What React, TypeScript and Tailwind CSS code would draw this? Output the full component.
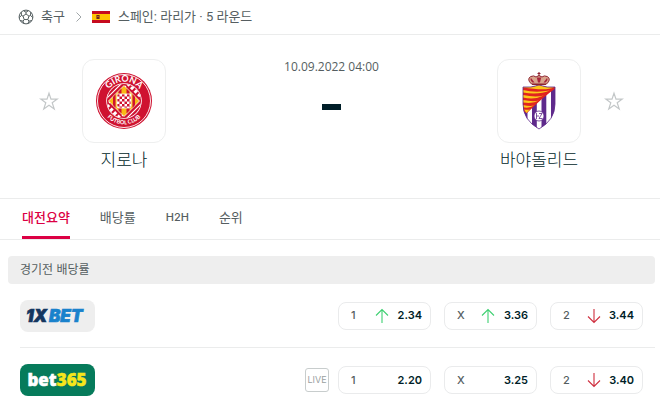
import React from "react";

const latin = "font-['Inter','Noto_Sans_CJK_KR',sans-serif]";

function Ball() {
  return (
    <svg viewBox="0 0 20 20" className="size-4 shrink-0" fill="none" stroke="#4a5557" strokeWidth="1.2" aria-hidden="true">
      <circle cx="10" cy="10" r="8.6" />
      <path d="M10 6.2l3.7 2.7-1.4 4.3H7.7L6.3 8.9z" />
      <path d="M10 6.2V4M13.7 8.9l2-.8M12.3 13.2l1.4 2M7.7 13.2l-1.4 2M6.3 8.9l-2-.8" />
      <path d="M6.8 2.2L10 4l3.2-1.8M15.9 4l-.2 4.1 2.7 2.6M17.2 14.4l-3.5.8-1.2 3M7.5 18.2l-1.2-3-3.5-.8M1.6 10.7l2.7-2.6L4.1 4" />
    </svg>
  );
}

function Flag() {
  return (
    <svg viewBox="0 0 18 12" className="ml-2.5 h-3 w-[18px] shrink-0" role="img" aria-label="스페인">
      <path fill="#c60b1e" d="M0 0h18v12H0z" />
      <path fill="#ffc400" d="M0 3h18v6H0z" />
      <path fill="#ad6518" d="M4 4h4v4H4z" />
      <path fill="#6b2a1c" d="M5 4h2v1H5zM5 6h2v2H5z" />
    </svg>
  );
}

function Star({ team }: { team: string }) {
  return (
    <button aria-label={`${team} 즐겨찾기`} className="size-5 shrink-0">
      <svg viewBox="0 0 20 20" className="size-5" fill="none" stroke="#c3c7c8" strokeWidth="1.2" strokeLinejoin="miter">
        <path d="M10 2.2l2 5.9h6.3l-5.1 3.7 2 6.1L10 14.2l-5.2 3.7 2-6.1L1.7 8.1H8z" />
      </svg>
    </button>
  );
}

function GironaCrest() {
  return (
    <svg viewBox="0 0 56 56" className="size-14" role="img" aria-label="Girona">
      <defs>
        <clipPath id="inner"><circle cx="28" cy="28" r="17" /></clipPath>
        <pattern id="check" width="5" height="5" patternUnits="userSpaceOnUse" x="21" y="21">
          <path fill="#fff" d="M0 0h5v5H0z" />
          <path fill="#cf1230" d="M0 0h2.500v2.500H0zM2.500 2.500h2.500v2.500H2.500z" />
        </pattern>
        <path id="arcTop" d="M8.6 28a19.4 19.4 0 0 1 38.8 0" />
        <path id="arcBottom" d="M4.6 28a23.4 23.4 0 0 0 46.8 0" />
      </defs>
      <circle cx="28" cy="28" r="28" fill="#cf1230" />
      <circle cx="28" cy="28" r="26.5" fill="none" stroke="#fff" strokeWidth=".9" />
      <circle cx="28" cy="28" r="17.8" fill="#fff" />
      <g clipPath="url(#inner)">
        <path fill="#cf1230" d="M11 11h34v34H11z" />
        <path stroke="#fff" strokeWidth="4.5" strokeDasharray="3 2" d="M32 10l17 17M7 29l17 17" />
        <path stroke="#fff" strokeWidth="1.2" d="M10 26l16-16M13 30l17-17M30 46l16-16M26 43l16-16" />
        <path fill="#f9bb16" stroke="#fff" strokeWidth=".8" d="M28 12.500l15.500 15.500-15.500 15.500-15.500-15.500z" />
        <path fill="#cf1230" d="M17 24l2.500-3v14l-2.500-3zM22.500 18.500l3-3v25l-3-3zM30.500 15.500l3 3v19l-3 3zM36.500 21l2.500 3v8l-2.500 3z" />
        <path fill="url(#check)" stroke="#fff" strokeWidth=".8" d="M21 21h14v12q0 2-2 2H23q-2 0-2-2z" />
      </g>
      <g fill="#fff" textAnchor="middle" className="font-['Lato',sans-serif] font-bold">
        <text fontSize="9"><textPath href="#arcTop" startOffset="50%">GIRONA</textPath></text>
        <text fontSize="5.6"><textPath href="#arcBottom" startOffset="50%">FUTBOL CLUB</textPath></text>
      </g>
    </svg>
  );
}

function ValladolidCrest() {
  return (
    <svg viewBox="0 0 34 58" className="h-[58px] w-[34px]" role="img" aria-label="Valladolid">
      <defs>
        <clipPath id="shield"><path d="M1 15q8 1 16-2 8 3 16 2v17q0 16-16 25Q1 48 1 32z" /></clipPath>
      </defs>
      <g clipPath="url(#shield)">
        <path fill="#fff" d="M0 12h34v46H0z" />
        <path fill="#5f2a8c" d="M0 12h5.500v46H0zM10 12h4.800v46H10zM19.500 12h4.800v46h-4.800zM29 12h5v46h-5z" />
        <path fill="#e0241f" d="M0 12h34v4Q22 24 5 41L0 39z" />
        <path fill="#fdc81a" d="M1 13h17l14 2.500Q24 19 1 15.500zM1 18q12 3 27 .5Q17 23 1 20.500zM1 23q12 2.500 21 .5Q13 28 1 25.500zM1 28q10 2 16 .5Q11 32 1 30.500zM1 33q7 1.500 11 .5-4 3-11 1.800zM2 37.500q4 .8 6-.2L4.500 41z" />
      </g>
      <path fill="none" stroke="#5f2a8c" strokeWidth=".8" d="M1 15q8 1 16-2 8 3 16 2v17q0 16-16 25Q1 48 1 32z" />
      <circle cx="17" cy="44" r="5" fill="#fff" stroke="#5f2a8c" strokeWidth=".8" />
      <path fill="none" stroke="#5f2a8c" strokeWidth=".8" d="M14.500 41v6M14.500 44h2.500M17 41.500h3l-3 5h3.500" />
      <path fill="#d9a58c" stroke="#8e2432" strokeWidth="1" d="M9.500 12Q4.500 7.500 8.500 4.600q3.500-1.600 5.500.4 3-3 6 0 2-2 5.500-.4 4 2.900-1 7.400z" />
      <path fill="#a8263c" d="M9 6l3.500 4.500h-2Q7.500 8 9 6zM14.800 5.500h4.400L18 10.500h-2zM25 6l-3.500 4.500h2Q26.500 8 25 6z" />
      <path stroke="#8e2432" strokeWidth="1.1" d="M17 0v4M15.500 1.500h3M10 12.500h14" />
    </svg>
  );
}

function Team({ name, children }: { name: string; children: React.ReactNode }) {
  return (
    <a href="#team" className="flex w-[84px] flex-col items-center">
      <span className="flex size-[84px] items-center justify-center rounded-xl border border-[#eeefef] bg-white">{children}</span>
      <span className="mt-1 text-[17px] leading-[26px] font-light whitespace-nowrap text-[#001e28]">{name}</span>
    </a>
  );
}

function Move({ dir }: { dir: "up" | "down" }) {
  return (
    <svg
      viewBox="0 0 14 16"
      className={dir === "up" ? "h-4 w-[14px] text-[#3fd072]" : "h-4 w-[14px] rotate-180 text-[#cf2f3f]"}
      fill="none"
      stroke="currentColor"
      strokeWidth="1.1"
      role="img"
      aria-label={dir === "up" ? "상승" : "하락"}
    >
      <path d="M7 15V1.500M1 7.500l6-6 6 6" />
    </svg>
  );
}

type Odd = { label: string; value: string; dir?: "up" | "down" };

function OddButton({ label, value, dir }: Odd) {
  return (
    <button className="flex h-7 w-[93px] items-center rounded-lg border border-[#eaebec] pr-2 pl-3 text-[11px] font-semibold text-[#001e28]">
      <span className="w-6 text-left font-medium text-[#555e61]">{label}</span>
      {dir && <Move dir={dir} />}
      <span className="ml-auto">{value}</span>
    </button>
  );
}

function OddsRow({ logo, odds, live }: { logo: React.ReactNode; odds: Odd[]; live?: boolean }) {
  return (
    <div className="flex h-16 items-center justify-between">
      {logo}
      <div className={`flex items-center gap-[13px] pr-3 ${latin}`}>
        {live && (
          <span className="-mr-1 flex size-6 items-center justify-center rounded-[3px] border border-[#c8cdcd] text-[9px] text-[#999fa1]">
            LIVE
          </span>
        )}
        {odds.map((o) => (
          <OddButton key={o.label} {...o} />
        ))}
      </div>
    </div>
  );
}

function OneXBet() {
  return (
    <a href="#1xbet" className="block h-8 w-[75px] rounded-lg bg-[#eeeeee]">
      <svg viewBox="0 0 75 32" className="h-8 w-[75px] font-['Inter',sans-serif] font-black italic" role="img" aria-label="1XBET">
        <text x="6" y="22" fontSize="17" fill="#14365f" stroke="#14365f" strokeWidth=".7">1X</text>
        <text x="29" y="22" fontSize="17" fill="#1a82cc" stroke="#1a82cc" strokeWidth=".7">BET</text>
      </svg>
    </a>
  );
}

function Bet365() {
  return (
    <a href="#bet365" className="block h-8 w-[75px] rounded-lg bg-[#067b5b]">
      <svg viewBox="0 0 75 32" className="h-8 w-[75px] font-['Noto_Sans',sans-serif] font-black" role="img" aria-label="bet365">
        <text x="37" y="22" fontSize="17" textAnchor="middle" fill="#fff" stroke="#fff" strokeWidth=".5">
          bet<tspan fill="#f5e61b" stroke="#f5e61b">365</tspan>
        </text>
      </svg>
    </a>
  );
}

const tabs = ["대전요약", "배당률", "H2H", "순위"];

export default function App() {
  return (
    <main className="w-full overflow-hidden bg-white font-['Inter','Noto_Sans_CJK_KR',sans-serif] text-[#555e61]">
      <nav className="flex h-[35px] items-center border-b border-[#ebecec] pl-[18px] text-[13px]">
        <Ball />
        <a href="#soccer" className="ml-[7px]">축구</a>
        <svg viewBox="0 0 6 10" className="ml-[11px] h-2.5 w-1.5 shrink-0" fill="none" stroke="#a0a6a8" aria-hidden="true">
          <path d="M.5.5L5 5 .5 9.5" />
        </svg>
        <Flag />
        <a href="#laliga" className="ml-2 font-['Roboto','Noto_Sans_CJK_KR',sans-serif]">스페인: 라리가 · 5 라운드</a>
      </nav>

      <header className="flex h-[164px] justify-between border-b border-[#ebecec] pt-6 pr-9 pl-[39px]">
        <div className="flex gap-[23px]">
          <div className="flex h-[84px] items-center"><Star team="지로나" /></div>
          <Team name="지로나"><GironaCrest /></Team>
        </div>
        <div className="flex flex-col items-center">
          <time className="font-['Open_Sans',sans-serif] text-[12px] leading-4">10.09.2022 04:00</time>
          <span className="mt-[29px] h-1.5 w-[19px] bg-[#001e28]" role="img" aria-label="예정" />
        </div>
        <div className="flex gap-[23px]">
          <Team name="바야돌리드"><ValladolidCrest /></Team>
          <div className="flex h-[84px] items-center"><Star team="바야돌리드" /></div>
        </div>
      </header>

      <div role="tablist" className="flex h-[41px] gap-[30px] border-b border-[#ebecec] pl-[22px] text-[13px]">
        {tabs.map((t, i) => (
          <button
            key={t}
            role="tab"
            aria-selected={i === 0}
            className={
              i === 0
                ? "border-b-3 border-[#dc0044] font-medium text-[#dc0044]"
                : t === "H2H"
                  ? "border-b-3 border-transparent text-[11px] font-medium"
                  : "border-b-3 border-transparent"
            }
          >
            {t}
          </button>
        ))}
      </div>

      <section className="mt-4 mr-[5px] ml-2">
        <h2 className="flex h-7 items-center rounded bg-[#eeeeee] pl-3 text-[12px]">경기전 배당률</h2>
        <div className="ml-3 divide-y divide-[#ebecec]">
          <OddsRow
            logo={<OneXBet />}
            odds={[
              { label: "1", value: "2.34", dir: "up" },
              { label: "X", value: "3.36", dir: "up" },
              { label: "2", value: "3.44", dir: "down" },
            ]}
          />
          <OddsRow
            logo={<Bet365 />}
            live
            odds={[
              { label: "1", value: "2.20" },
              { label: "X", value: "3.25" },
              { label: "2", value: "3.40", dir: "down" },
            ]}
          />
        </div>
      </section>
    </main>
  );
}
